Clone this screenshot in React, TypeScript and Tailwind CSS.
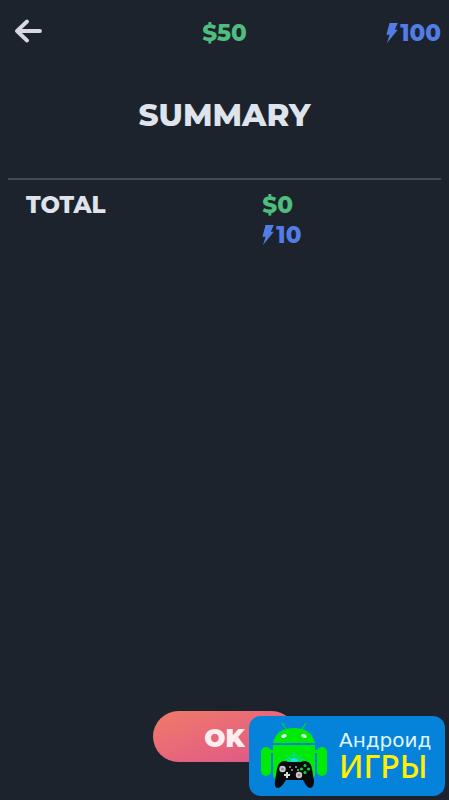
import type { ReactNode } from "react";

function Bolt() {
  return (
    <svg viewBox="0 0 12 20" className="h-5 w-3 shrink-0" fill="currentColor" aria-hidden="true">
      <path d="M3.6 0H11.8L8.8 6.8H11.8L1 20L3.6 11.8H0.4Z" />
    </svg>
  );
}

function Money({ children }: { children: ReactNode }) {
  return <span className="text-[#4fbd7b]">{children}</span>;
}

function Energy({ value }: { value: number }) {
  return (
    <span className="flex items-center gap-0.5 text-[#527de6]">
      <Bolt />
      {value}
    </span>
  );
}

function RobotLogo() {
  return (
    <svg viewBox="0 0 66 66" className="size-[66px] shrink-0" aria-hidden="true">
      <g fill="#00ea08">
        <path d="M12 20C14 10 22 5 33 5s19 5 21 15Z" />
        <path d="M12 22H54V51Q54 56 49 56H17Q12 56 12 51Z" />
        <rect x="0" y="24" width="10" height="29" rx="5" />
        <rect x="56" y="24" width="10" height="29" rx="5" />
        <path d="M9 27h4v3H9zM53 27h4v3h-4z" />
      </g>
      <path d="M25 6L21 0M41 6L45 0" stroke="#00d91b" strokeWidth="1.2" strokeLinecap="round" />
      <ellipse cx="23" cy="13" rx="2.8" ry="1.8" fill="#eaffea" transform="rotate(-22 23 13)" />
      <ellipse cx="43" cy="13" rx="2.8" ry="1.8" fill="#eaffea" transform="rotate(22 43 13)" />
      <g stroke="#08d9bd" strokeWidth="1" fill="none">
        <path d="M33 38V29M30 37L25 31M36 37L41 31M29 38L23 36M37 38L43 36" />
        <path d="M26 37Q33 27 40 37" />
      </g>
      <ellipse cx="33" cy="37" rx="4" ry="2" fill="#17dfe8" />
      <path
        d="M20 39Q24 37 27 39H40Q43 37 47 39Q50 40 51 46L53 58Q53 65 49 65Q46 65 42 57H25Q20 65 17 65Q13 65 14 58L16 46Q17 41 20 39Z"
        fill="#07090b"
      />
      <circle cx="21.5" cy="46" r="3.2" fill="#c9cccc" />
      <circle cx="21.5" cy="46" r="1.6" fill="#8d9292" />
      <circle cx="38" cy="52" r="3.2" fill="#cfcaca" />
      <circle cx="38" cy="52" r="1.6" fill="#a28f8f" />
      <path d="M25 49h2v2h2v2h-2v2h-2v-2h-2v-2h2z" fill="#d8dada" />
      <path d="M29 43v2M31 46v2M35 43v2M37 46v2" stroke="#d4dede" strokeWidth="1.1" />
      <g fill="#00dc32">
        <circle cx="44" cy="42.5" r="1.6" />
        <circle cx="44" cy="49.5" r="1.6" />
        <circle cx="40.5" cy="46" r="1.6" />
        <circle cx="47.5" cy="46" r="1.6" />
      </g>
    </svg>
  );
}

export default function App() {
  return (
    <div className="relative flex min-h-screen flex-col bg-[#1d232d] px-2 font-['Montserrat','Inter',sans-serif] text-[23px]/[30px] font-extrabold text-[#dfe3eb]">
      <header className="grid grid-cols-3 items-center pt-[17px]">
        <button type="button" aria-label="Back" className="flex h-8 w-10 items-center pl-1">
          <svg viewBox="0 0 32 28" className="h-7 w-8" fill="none" aria-hidden="true">
            <path
              d="M15 2.5L5 12L15 21.5M5 12H28"
              stroke="#d6d8e2"
              strokeWidth="3.8"
              strokeLinecap="round"
              strokeLinejoin="round"
            />
          </svg>
        </button>
        <div className="text-center">
          <Money>$50</Money>
        </div>
        <div className="flex justify-end">
          <Energy value={100} />
        </div>
      </header>

      <main className="flex grow flex-col">
        <h1 className="border-b-2 border-[#454951] pt-[47px] pb-11 text-center text-[31px]/[38px]">SUMMARY</h1>
        <div className="grid grid-cols-[6fr_5fr] pt-2.5 pl-[18px]">
          <span>TOTAL</span>
          <div className="flex flex-col pl-2.5">
            <Money>$0</Money>
            <Energy value={10} />
          </div>
        </div>
        <button
          type="button"
          className="mx-auto mt-auto mb-[38px] h-[51px] w-36 rounded-full bg-linear-to-br from-[#f07a67] to-[#df528a] pt-0.5 text-[25px] font-black text-[#ffeeef]"
        >
          OK
        </button>
      </main>

      <div className="absolute right-1 bottom-1 flex h-20 w-49 items-center gap-3 rounded-xl bg-[#0583da] pl-3">
        <RobotLogo />
        <div className="flex flex-col pb-1 font-['Noto_Sans',sans-serif]">
          <span className="font-['DejaVu_Sans',sans-serif] text-xl/6 font-normal text-[#e1f5ff]">Андроид</span>
          <span className="text-[32px]/7 font-medium text-[#fff000]">ИГРЫ</span>
        </div>
      </div>
    </div>
  );
}
